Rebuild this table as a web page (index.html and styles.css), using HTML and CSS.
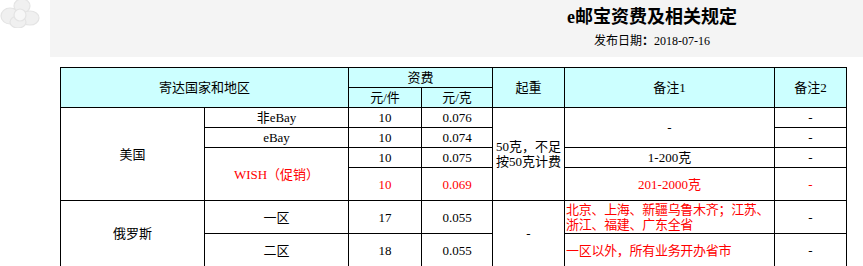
FILE: index.html
```html
<!DOCTYPE html>
<html lang="zh">
<head>
<meta charset="utf-8">
<title>e邮宝资费及相关规定</title>
<link rel="stylesheet" href="styles.css">
</head>
<body>
<div class="page">
  <div class="logo">
    <svg width="44" height="28" viewBox="0 0 44 28">
      <g fill="#f0f0f0" stroke="#e4e4e4" stroke-width="1.2">
        <ellipse cx="10" cy="16" rx="9" ry="8"/>
        <ellipse cx="22" cy="6" rx="8" ry="7"/>
        <ellipse cx="30" cy="18" rx="9" ry="7"/>
        <ellipse cx="18" cy="22" rx="8" ry="6"/>
        <circle cx="20" cy="15" r="6" fill="#f7f7f7"/>
      </g>
    </svg>
  </div>
  <header class="head">
    <h1 class="title">e邮宝资费及相关规定</h1>
    <p class="date">发布日期<b>：</b>2018-07-16</p>
  </header>
  <table class="rates">
    <colgroup>
      <col class="c1"><col class="c2"><col class="c3"><col class="c4"><col class="c5"><col class="c6"><col class="c7">
    </colgroup>
    <tr class="h">
      <th colspan="2" rowspan="2">寄达国家和地区</th>
      <th colspan="2">资费</th>
      <th rowspan="2">起重</th>
      <th rowspan="2">备注1</th>
      <th rowspan="2">备注2</th>
    </tr>
    <tr class="h">
      <th>元/件</th>
      <th>元/克</th>
    </tr>
    <tr class="r20">
      <td rowspan="4">美国</td>
      <td>非eBay</td>
      <td>10</td>
      <td>0.076</td>
      <td rowspan="4" class="wrap">50克，不足<br>按50克计费</td>
      <td rowspan="2">-</td>
      <td>-</td>
    </tr>
    <tr class="r20">
      <td>eBay</td>
      <td>10</td>
      <td>0.074</td>
      <td>-</td>
    </tr>
    <tr class="r20">
      <td rowspan="2" class="red">WISH（促销）</td>
      <td>10</td>
      <td>0.075</td>
      <td>1-200克</td>
      <td>-</td>
    </tr>
    <tr class="r33">
      <td class="red">10</td>
      <td class="red">0.069</td>
      <td class="red">201-2000克</td>
      <td class="red">-</td>
    </tr>
    <tr class="r33">
      <td rowspan="2">俄罗斯</td>
      <td>一区</td>
      <td>17</td>
      <td>0.055</td>
      <td rowspan="2">-</td>
      <td class="red left">北京、上海、新疆乌鲁木齐；江苏、浙江、福建、广东全省</td>
      <td>-</td>
    </tr>
    <tr class="r33">
      <td>二区</td>
      <td>18</td>
      <td>0.055</td>
      <td class="red left">一区以外，所有业务开办省市</td>
      <td>-</td>
    </tr>
  </table>
</div>
</body>
</html>
```

FILE: styles.css
```css
html, body {
  margin: 0;
  padding: 0;
  background: #ffffff;
}
.page {
  position: relative;
  font-family: "Liberation Serif", "Noto Sans CJK SC", serif;
  color: #000;
}
.logo {
  position: absolute;
  left: 0;
  top: 0;
}
.head {
  margin-left: 50px;
  height: 57px;
  background: #f4f4f4;
  text-align: center;
  box-sizing: border-box;
  padding: 5px 0 0 391px;
}
.title {
  margin: 0;
  font-size: 18px;
  line-height: 24px;
  font-weight: bold;
  font-family: "Liberation Serif", "Noto Sans CJK SC", serif;
}
.date {
  margin: 4px 0 0;
  font-size: 12px;
  line-height: 17px;
}
.date b {
  font-weight: bold;
}
.rates {
  margin: 10px 0 0 60px;
  border-collapse: collapse;
  table-layout: fixed;
  width: 787px;
  font-size: 13px;
}
.c1 { width: 144px; }
.c2 { width: 144px; }
.c3 { width: 73px; }
.c4 { width: 71px; }
.c5 { width: 72px; }
.c6 { width: 210px; }
.c7 { width: 72px; }
.rates th, .rates td {
  border: 1px solid #000;
  padding: 0 1px;
  text-align: center;
  vertical-align: middle;
  font-weight: normal;
  line-height: 15px;
}
.rates th {
  background: #ccffff;
}
.h { height: 20px; }
.r20 { height: 20px; }
.r33 { height: 33px; }
.red { color: #ff0000; }
.rates td.left {
  text-align: left;
  padding: 0 0 0 1px;
  letter-spacing: -0.3px;
}
.wrap { line-height: 15px; }
```
